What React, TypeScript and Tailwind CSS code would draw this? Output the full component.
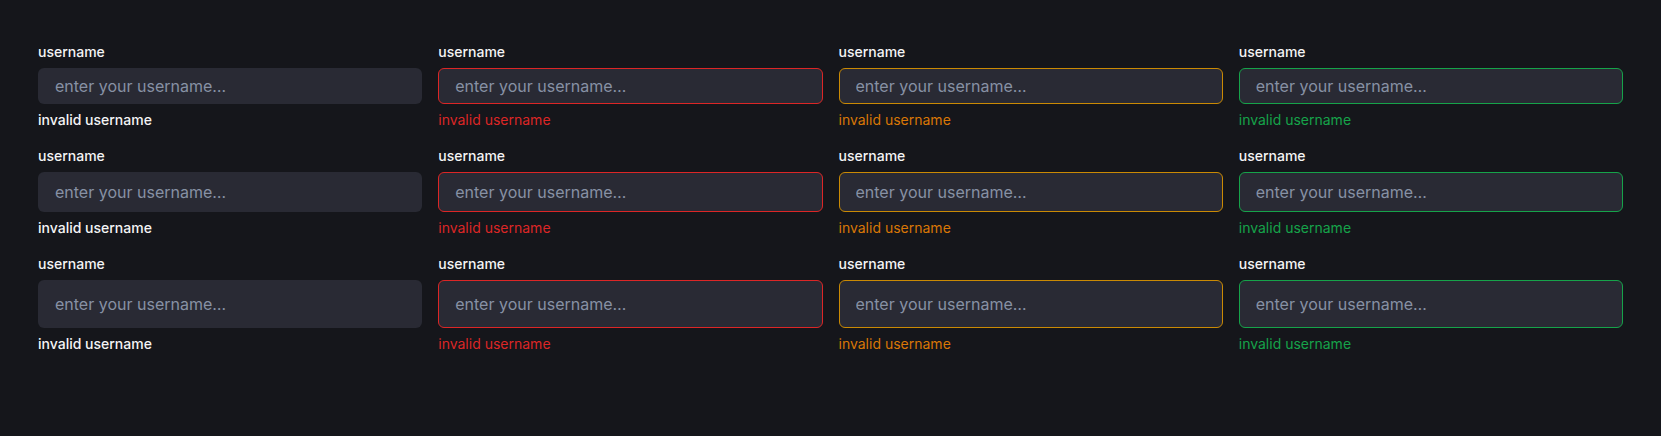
const variants = [
  { border: 'border-transparent', text: 'text-[#f4f4f5] font-medium' },
  { border: 'border-[#dc2626]', text: 'text-[#dc2626]' },
  { border: 'border-[#ca8a04]', text: 'text-[#d97706]' },
  { border: 'border-[#16a34a]', text: 'text-[#16a34a]' },
];

const sizes = ['h-9', 'h-10', 'h-12'];

function Field({ size, variant }: { size: string; variant: (typeof variants)[number] }) {
  return (
    <div className="flex flex-col gap-1.5">
      <label className="text-sm leading-5 font-medium text-[#f4f4f5]">username</label>
      <input
        placeholder="enter your username…"
        className={`${size} w-full rounded-md border bg-[#292a34] px-4 text-base text-[#e4e4e7] placeholder:text-[#8791a4] outline-none ${variant.border}`}
      />
      <p className={`text-sm leading-5 ${variant.text}`}>invalid username</p>
    </div>
  );
}

export default function App() {
  return (
    <div className="min-h-[436px] bg-[#15161b] px-[38px] pt-[42px] font-['Inter','Liberation_Sans',sans-serif]">
      <div className="flex flex-col gap-4">
        {sizes.map((size) => (
          <div key={size} className="grid grid-cols-4 gap-x-4">
            {variants.map((v, i) => (
              <Field key={i} size={size} variant={v} />
            ))}
          </div>
        ))}
      </div>
    </div>
  );
}
